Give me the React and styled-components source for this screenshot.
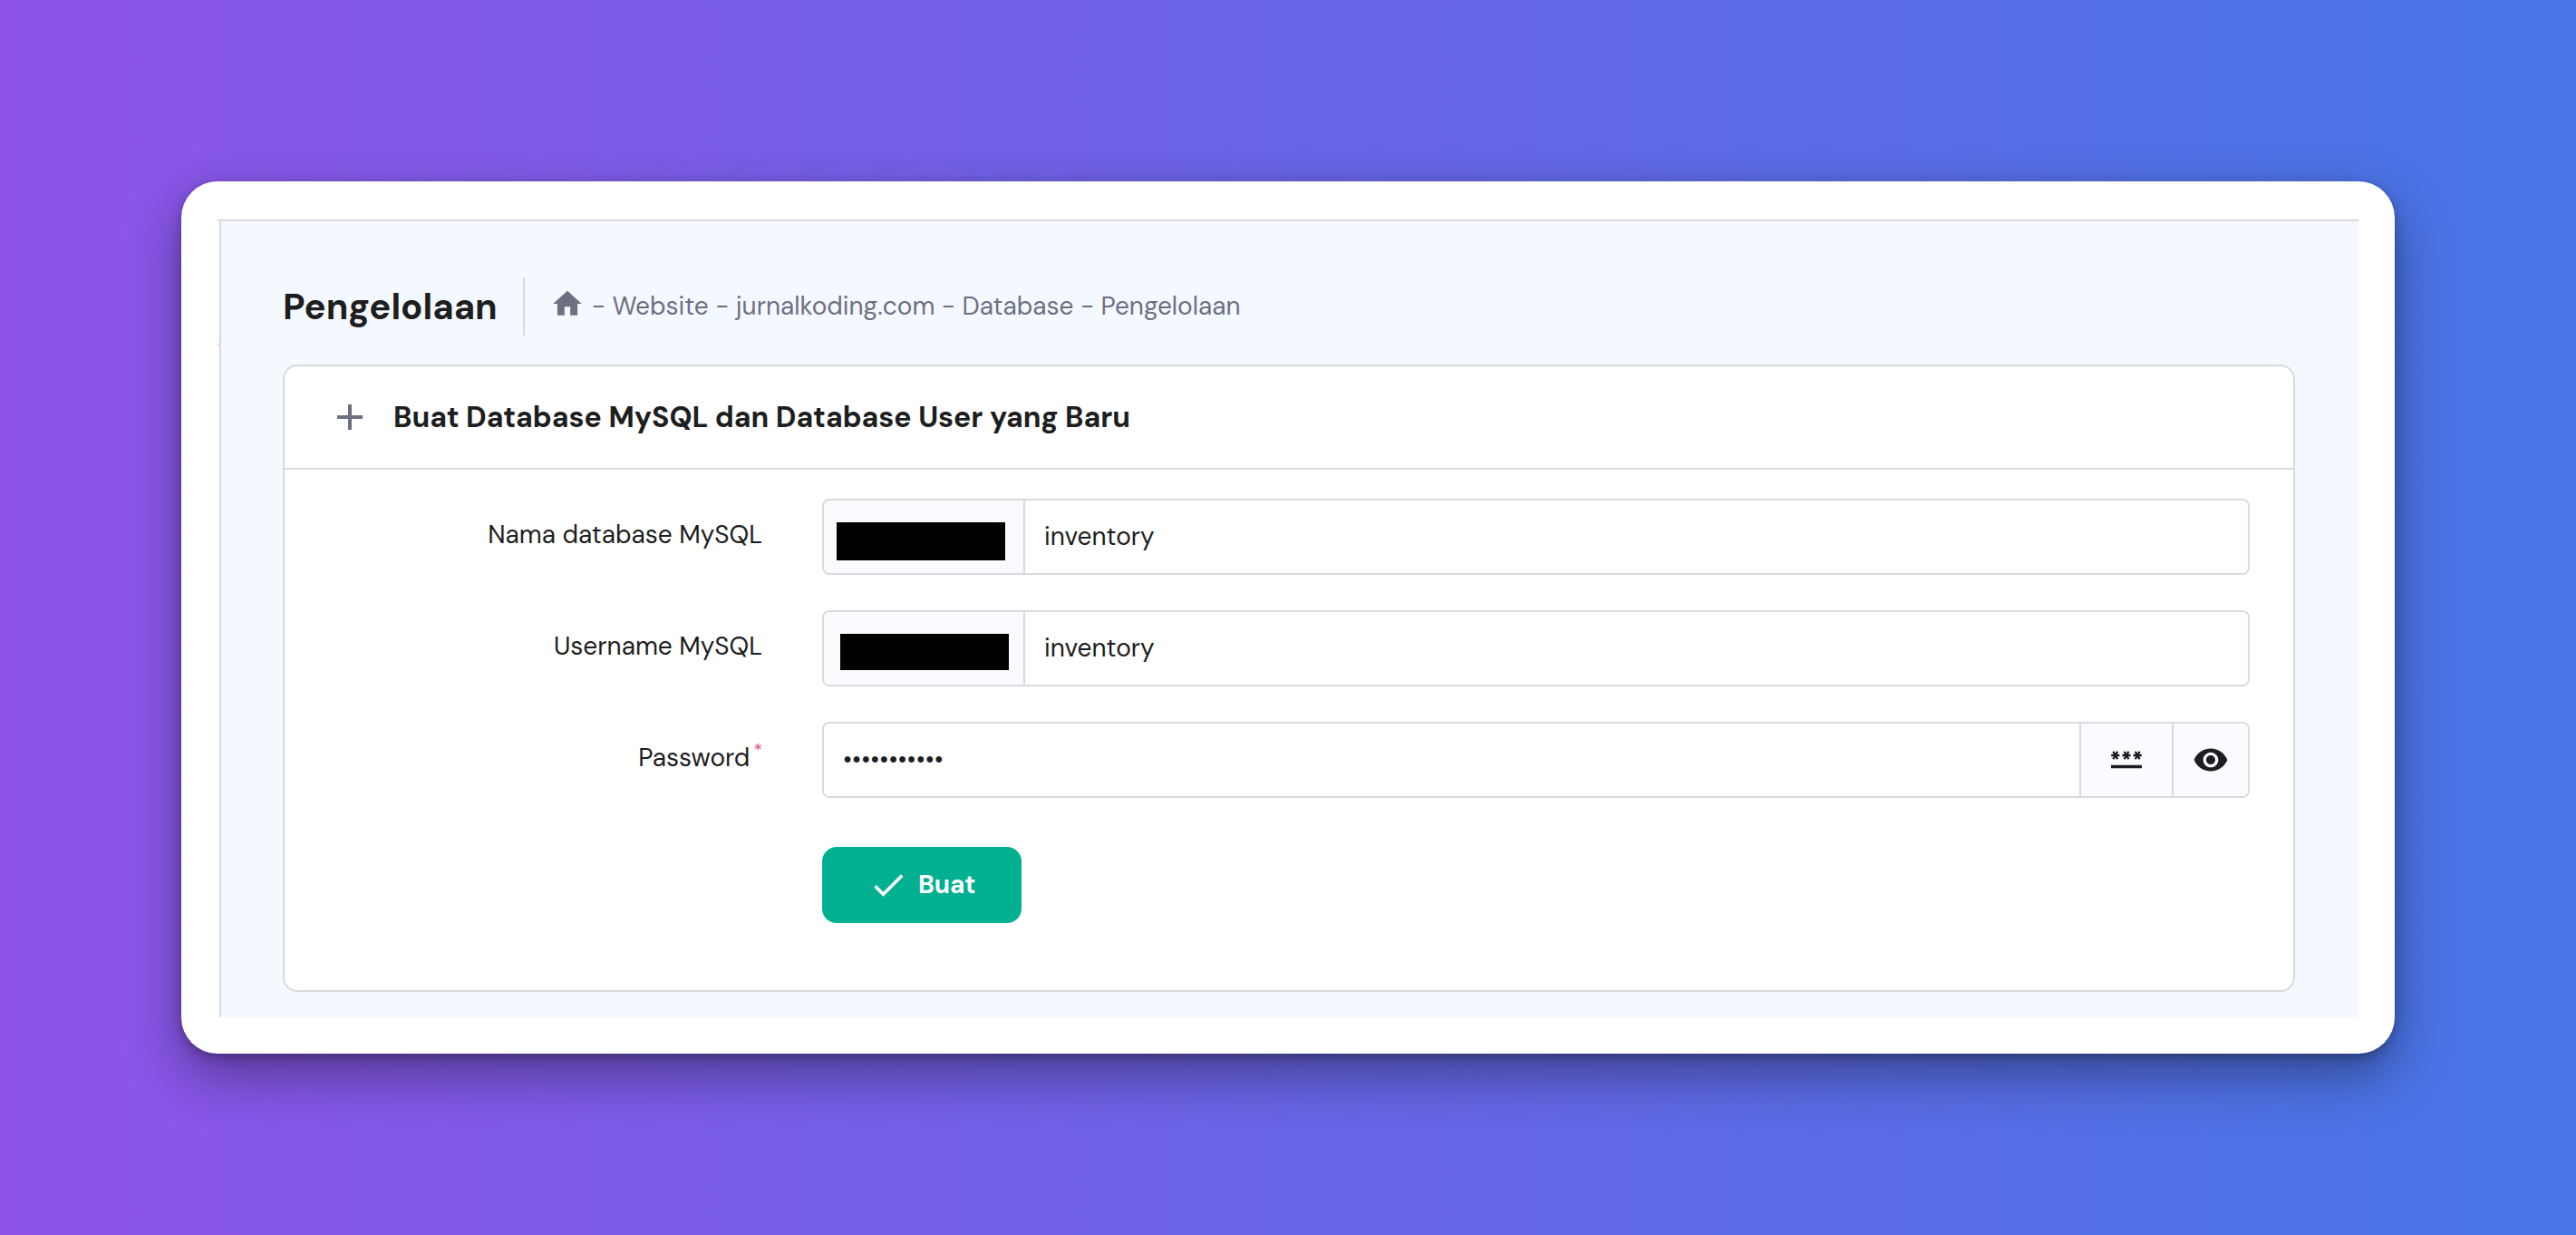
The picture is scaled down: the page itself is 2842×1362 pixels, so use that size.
import React, { useState } from 'react';
import styled, { createGlobalStyle } from 'styled-components';
import { MdHome, MdAdd, MdCheck, MdVisibility } from 'react-icons/md';

const line = '#d9dadd';
const ink = '#1d1e20';
const muted = '#6d7081';

const GlobalStyle = createGlobalStyle`
  *, *::before, *::after { box-sizing: border-box; }
  body {
    margin: 0;
    color: ${ink};
    font-family: "DM Sans", Inter, sans-serif;
    font-size: 28px;
    line-height: 36px;
  }
  button, input { font: inherit; color: inherit; }
`;

const Backdrop = styled.main`
  min-height: 100vh;
  padding: 200px;
  background: linear-gradient(to right, #8e54e9, #4776e6);
`;

const Window = styled.div`
  padding: 40px;
  border-radius: 40px;
  background: #fff;
  box-shadow: 0 4px 12px rgba(0, 0, 0, 0.25), 0 24px 60px rgba(0, 0, 0, 0.38);
`;

const Page = styled.div`
  display: grid;
  grid-template-columns: 2px 1fr;
  margin-top: 2px;
  border-top: 2px solid ${line};
`;

const SidebarEdge = styled.div`
  padding-top: 135px;

  &::before {
    content: "";
    display: block;
    height: 2px;
    background: ${line};
  }
`;

const Content = styled.div`
  padding: 62px 70px 28px 68px;
  border-left: 2px solid ${line};
  background: #f4f9ff;
`;

const PageHeader = styled.header`
  display: flex;
  align-items: center;
  height: 64px;
  margin-bottom: 32px;
`;

const Title = styled.h1`
  margin: 0;
  padding-right: 28px;
  font-size: 40px;
  line-height: 52px;
  font-weight: 700;
`;

const Breadcrumb = styled.nav`
  display: flex;
  align-items: center;
  align-self: stretch;
  gap: 8px;
  padding-left: 28px;
  border-left: 2px solid ${line};
  color: ${muted};
  white-space: pre;

  a { color: inherit; text-decoration: none; }
`;

const HomeLink = styled.a`
  display: flex;
  padding-bottom: 6px;
`;

const Card = styled.section`
  border: 2px solid ${line};
  border-radius: 16px;
  background: #fff;
`;

const CardHeader = styled.header`
  display: flex;
  align-items: center;
  gap: 24px;
  height: 114px;
  padding: 0 48px;
  border-bottom: 2px solid ${line};

  svg { color: ${muted}; }
`;

const CardTitle = styled.h2`
  margin: 0;
  font-size: 32px;
  line-height: 42px;
  font-weight: 700;
`;

const Form = styled.form`
  display: grid;
  gap: 39px;
  padding: 32px 48px 74px 0;
`;

const Row = styled.div`
  display: grid;
  grid-template-columns: 593fr 1575fr;
  align-items: center;
`;

const Label = styled.label`
  padding: 0 66px 4px 0;
  text-align: right;
`;

const Required = styled.span`
  margin-left: 4px;
  color: #e0507f;
  font-size: 20px;
  line-height: 0;
  vertical-align: 11px;
`;

const Field = styled.div`
  display: flex;
  height: 84px;
  overflow: hidden;
  border: 2px solid ${line};
  border-radius: 8px;
`;

const Prefix = styled.div`
  display: flex;
  align-items: center;
  width: 222px;
  padding-top: ${(p) => p.$top}px;
  padding-left: ${(p) => p.$left}px;
  border-right: 2px solid ${line};
  background: #fafbff;
`;

const Redaction = styled.span`
  width: 186px;
  height: ${(p) => p.$height}px;
  background: #000;
`;

const Input = styled.input`
  flex: 1;
  min-width: 0;
  padding: 0 21px;
  border: 0;
  outline: 0;
  background: #fff;
`;

const FieldButton = styled.button`
  display: flex;
  align-items: center;
  justify-content: center;
  width: ${(p) => p.$width}px;
  padding: 0;
  border: 0;
  border-left: 2px solid ${line};
  background: #fafbff;
  cursor: pointer;
`;

const Actions = styled(Row)`
  padding-top: 15px;
`;

const Submit = styled.button`
  display: flex;
  grid-column: 2;
  justify-self: start;
  align-items: center;
  gap: 11px;
  height: 84px;
  padding: 0 51px;
  border: 0;
  border-radius: 16px;
  background: #00b090;
  color: #fff;
  font-weight: 700;
  cursor: pointer;
`;

function GenerateIcon() {
  return (
    <svg width="34" height="20" viewBox="0 0 34 20" fill="none" stroke="currentColor" strokeWidth="2.3">
      {[4.8, 17, 29.2].map((x) => (
        <path key={x} d={`M${x - 4.6} 5h9.2M${x - 2.4} .8l4.8 8.4M${x + 2.4} .8l-4.8 8.4`} />
      ))}
      <path d="M0 17.5h34" strokeWidth="3.4" />
    </svg>
  );
}

function PrefixedField({ id, label, redaction }) {
  const [value, setValue] = useState('inventory');
  return (
    <Row>
      <Label htmlFor={id}>{label}</Label>
      <Field>
        <Prefix $top={redaction.top} $left={redaction.left}>
          <Redaction $height={redaction.height} />
        </Prefix>
        <Input id={id} value={value} onChange={(e) => setValue(e.target.value)} />
      </Field>
    </Row>
  );
}

function PasswordField() {
  const [value, setValue] = useState('inventory24');
  const [visible, setVisible] = useState(false);
  return (
    <Row>
      <Label htmlFor="password">Password<Required>*</Required></Label>
      <Field>
        <Input
          id="password"
          type={visible ? 'text' : 'password'}
          value={value}
          onChange={(e) => setValue(e.target.value)}
        />
        <FieldButton type="button" $width={102} aria-label="Generate password">
          <GenerateIcon />
        </FieldButton>
        <FieldButton
          type="button"
          $width={84}
          aria-label="Show password"
          onClick={() => setVisible(!visible)}
        >
          <MdVisibility size={40} />
        </FieldButton>
      </Field>
    </Row>
  );
}

export default function App() {
  return (
    <>
      <GlobalStyle />
      <Backdrop>
        <Window>
          <Page>
            <SidebarEdge />
            <Content>
              <PageHeader>
                <Title>Pengelolaan</Title>
                <Breadcrumb>
                  <HomeLink href="#home" aria-label="Home"><MdHome size={38} /></HomeLink>
                  <span>
                    - <a href="#website">Website</a> - <a href="#site">jurnalkoding.com</a> - <a href="#database">Database</a> - Pengelolaan
                  </span>
                </Breadcrumb>
              </PageHeader>
              <Card>
                <CardHeader>
                  <MdAdd size={48} />
                  <CardTitle>Buat Database MySQL dan Database User yang Baru</CardTitle>
                </CardHeader>
                <Form onSubmit={(e) => e.preventDefault()}>
                  <PrefixedField
                    id="database"
                    label="Nama database MySQL"
                    redaction={{ left: 14, top: 10, height: 42 }}
                  />
                  <PrefixedField
                    id="username"
                    label="Username MySQL"
                    redaction={{ left: 18, top: 8, height: 40 }}
                  />
                  <PasswordField />
                  <Actions>
                    <Submit type="submit"><MdCheck size={44} />Buat</Submit>
                  </Actions>
                </Form>
              </Card>
            </Content>
          </Page>
        </Window>
      </Backdrop>
    </>
  );
}
